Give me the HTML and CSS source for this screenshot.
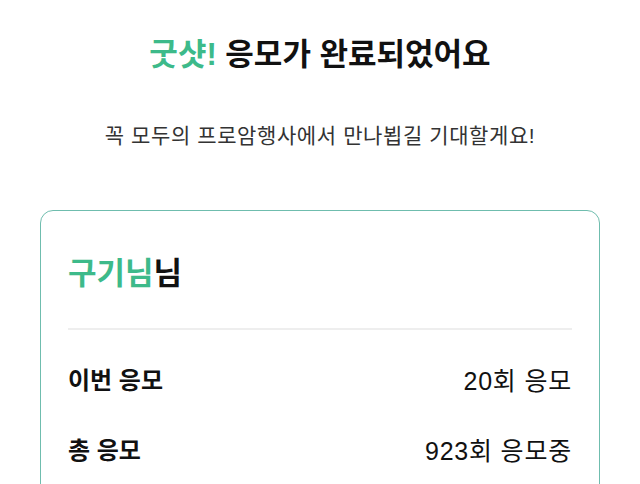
FILE: index.html
```html
<!DOCTYPE html>
<html lang="ko">
<head>
<meta charset="utf-8">
<link rel="stylesheet" href="styles.css">
</head>
<body>
<main class="page">
  <h1 class="title"><span class="accent">굿샷!</span> 응모가 완료되었어요</h1>
  <p class="subtitle">꼭 모두의 프로암행사에서 만나뵙길 기대할게요!</p>
  <section class="card">
    <h2 class="name"><span class="accent">구기님</span>님</h2>
    <hr class="divider">
    <div class="row">
      <span class="label">이번 응모</span>
      <span class="value">20회 응모</span>
    </div>
    <div class="row">
      <span class="label">총 응모</span>
      <span class="value">923회 응모중</span>
    </div>
  </section>
</main>
</body>
</html>
```

FILE: styles.css
```css
* { box-sizing: border-box; }
html, body { margin: 0; padding: 0; background: #fff; }
body {
  font-family: "Liberation Sans", "Noto Sans CJK KR", sans-serif;
  color: #111;
  overflow: hidden;
}
.page {
  padding: 35px 40px 0;
  display: flex;
  flex-direction: column;
}
.title {
  margin: 0;
  font-size: 31px;
  line-height: 40px;
  font-weight: 700;
  text-align: center;
  color: #111;
}
.accent { color: #3dba8a; }
.subtitle {
  margin: 47px 0 0;
  font-size: 21px;
  line-height: 28px;
  letter-spacing: 0.6px;
  text-align: center;
  color: #333;
}
.card {
  margin-top: 60px;
  border: 1.5px solid #6fbdae;
  border-radius: 13px;
  padding: 43px 27px 40px;
  min-height: 320px;
}
.name {
  margin: 0;
  font-size: 31px;
  line-height: 39px;
  font-weight: 700;
  color: #111;
}
.divider {
  margin: 35px 0 0;
  border: 0;
  height: 2px;
  background: #eeeeee;
}
.row {
  display: flex;
  justify-content: space-between;
  align-items: center;
  font-size: 24px;
  line-height: 30px;
  margin-top: 36px;
}
.row + .row { margin-top: 40px; }
.label { font-weight: 700; color: #111; }
.value { font-weight: 400; font-size: 25px; letter-spacing: 0.8px; color: #111; }
```
